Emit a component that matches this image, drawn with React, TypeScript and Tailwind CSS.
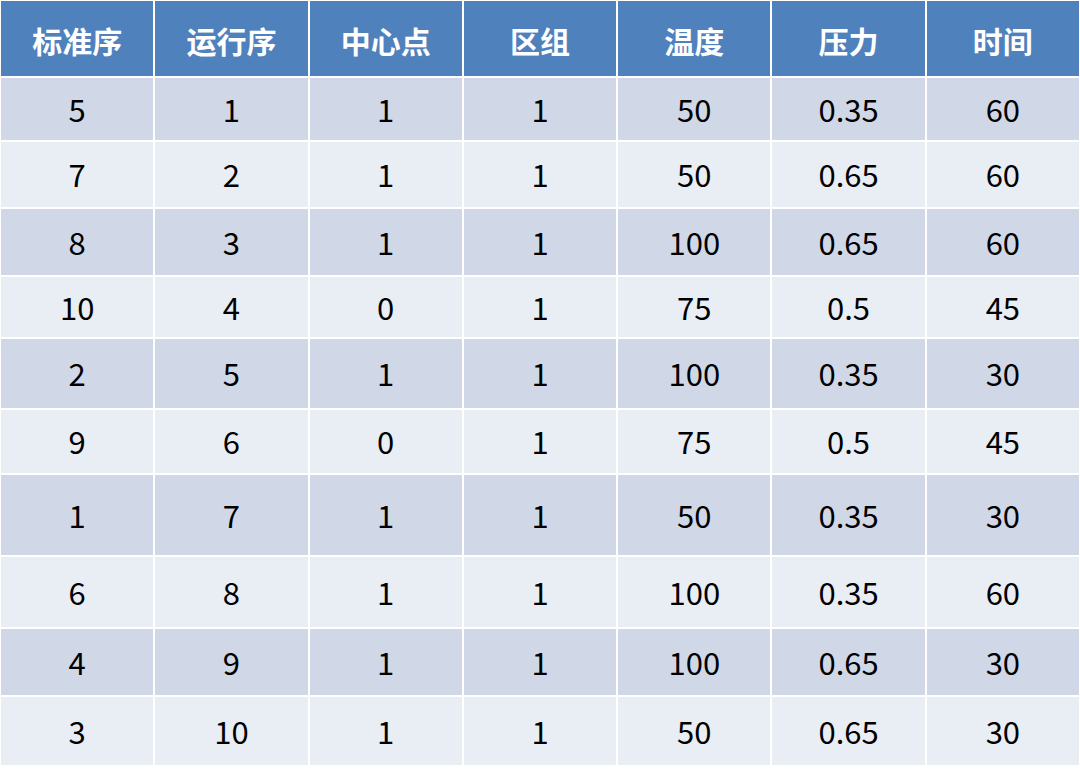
import React from 'react';

const headers = ['标准序', '运行序', '中心点', '区组', '温度', '压力', '时间'];

// row heights measured off the slide, they are not even
const rows: { h: string; cells: string[] }[] = [
  { h: 'h-[62px]', cells: ['5', '1', '1', '1', '50', '0.35', '60'] },
  { h: 'h-[65px]', cells: ['7', '2', '1', '1', '50', '0.65', '60'] },
  { h: 'h-[66px]', cells: ['8', '3', '1', '1', '100', '0.65', '60'] },
  { h: 'h-[60px]', cells: ['10', '4', '0', '1', '75', '0.5', '45'] },
  { h: 'h-[69px]', cells: ['2', '5', '1', '1', '100', '0.35', '30'] },
  { h: 'h-[63px]', cells: ['9', '6', '0', '1', '75', '0.5', '45'] },
  { h: 'h-[80px]', cells: ['1', '7', '1', '1', '50', '0.35', '30'] },
  { h: 'h-[70px]', cells: ['6', '8', '1', '1', '100', '0.35', '60'] },
  { h: 'h-[66px]', cells: ['4', '9', '1', '1', '100', '0.65', '30'] },
  { h: 'h-[68px]', cells: ['3', '10', '1', '1', '50', '0.65', '30'] },
];

const App: React.FC = () => {
  return (
    <div className="w-[1080px] h-[769px] bg-white pt-px pl-px font-['Noto_Sans_CJK_SC','Noto_Sans',sans-serif]">
      <div className="w-[1078px] flex flex-col gap-[2px]">
        <div className="grid grid-cols-7 gap-[2px] h-[75px]">
          {headers.map(h => (
            <div key={h} className="bg-[#4f81bd] flex items-center justify-center pt-[3px] text-white font-bold text-[30px]">
              {h}
            </div>
          ))}
        </div>
        {rows.map((row, i) => (
          <div key={i} className={`grid grid-cols-7 gap-[2px] ${row.h}`}>
            {row.cells.map((c, j) => (
              <div
                key={j}
                className={`${i % 2 === 0 ? 'bg-[#d0d8e8]' : 'bg-[#e9edf4]'} flex items-center justify-center text-black text-[31px]`}
              >
                {c}
              </div>
            ))}
          </div>
        ))}
      </div>
    </div>
  );
};

export default App;
